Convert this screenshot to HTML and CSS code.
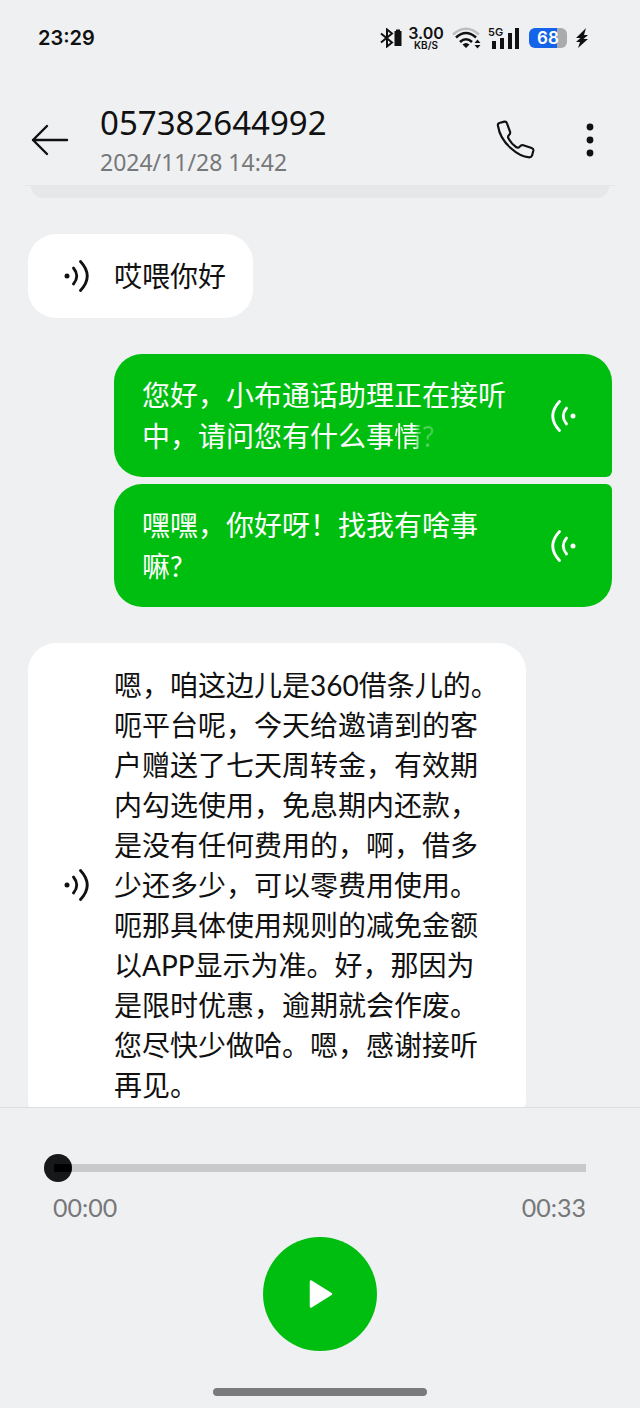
FILE: index.html
```html
<!DOCTYPE html>
<html lang="zh-CN">
<head>
<meta charset="utf-8">
<meta name="viewport" content="width=device-width, initial-scale=1">
<title>057382644992</title>
<link rel="stylesheet" href="styles.css">
</head>
<body>
<svg class="defs" aria-hidden="true">
  <symbol id="voice" viewBox="0 0 26 34">
    <circle cx="3" cy="17" r="2.500" fill="currentColor"/>
    <path d="M9.500 9Q16 17 9.500 25M16.500 2.500Q30 17 16.500 31.500" fill="none" stroke="currentColor" stroke-width="2.800" stroke-linecap="round"/>
  </symbol>
</svg>
<div class="app">
  <div class="status">
    <span class="clock">23:29</span>
    <div class="indicators">
      <svg class="bt" viewBox="0 0 22 20" aria-hidden="true">
        <path d="M1 5.500L12 14.500L7 18.500V1.500L12 5.500L1 14.500" fill="none" stroke="#111" stroke-width="2"/>
        <path d="M16 1.500h4v1.500h1.500V18h-7V3H16z" fill="#111"/>
      </svg>
      <span class="speed"><span class="rate">3.00</span><span class="unit">KB/S</span></span>
      <svg class="wifi" viewBox="0 0 30 22" aria-hidden="true">
        <path d="M1 7.500Q14 -4 27 7.500" fill="none" stroke="#bbbdbf" stroke-width="2.500"/>
        <path d="M4 10.500Q14 1.500 24 10.500M8 15Q14 9.500 20 15" fill="none" stroke="#111" stroke-width="2.600"/>
        <path d="M10.500 17.500Q14 14.500 17.500 17.500L14 21zM22.500 16L25.500 12.500l3 3.500zM22.500 18L25.500 21.500l3-3.500z" fill="#111"/>
      </svg>
      <span class="cell">
        <svg viewBox="0 0 32 22" aria-hidden="true"><path d="M4 14h4v8H4zM12 11h4v11h-4zM20 6h4v16h-4zM27 1h4v21h-4z" fill="#111"/></svg>
        <span class="net">5G</span>
      </span>
      <span class="battery"><span class="level">68</span></span>
      <svg class="bolt" viewBox="0 0 14 22" aria-hidden="true"><path d="M11 1L1 11h4.500L1 15h4L3 21L13 12H8.500L13 8H9z" fill="#111"/></svg>
    </div>
  </div>

  <header class="header">
    <button class="icon-btn" type="button" aria-label="返回">
      <svg class="back" viewBox="0 0 38 32" aria-hidden="true"><path d="M36 16H2M16 2L2 16L16 30" fill="none" stroke="#111" stroke-width="2.400" stroke-linecap="round" stroke-linejoin="round"/></svg>
    </button>
    <div class="caller">
      <h1 class="number">057382644992</h1>
      <p class="date">2024/11/28 14:42</p>
    </div>
    <button class="icon-btn" type="button" aria-label="拨打">
      <svg class="phone" viewBox="48 56 120 120" aria-hidden="true"><path d="M54 74Q52 67 58 65L73 61Q79 60 81 66L90 91Q92 97 87 101Q82 106 86 112Q95 128 108 137Q114 141 119 136Q124 130 130 132L155 140Q161 142 160 148L156 163Q154 168 148 168Q120 166 92 140Q60 112 54 74Z" fill="none" stroke="#111" stroke-width="6.500" stroke-linejoin="round"/></svg>
    </button>
    <button class="icon-btn" type="button" aria-label="更多">
      <svg class="more" viewBox="0 0 8 34" aria-hidden="true"><g fill="#111"><circle cx="4" cy="4" r="3.400"/><circle cx="4" cy="17" r="3.400"/><circle cx="4" cy="30" r="3.400"/></g></svg>
    </button>
  </header>

  <main class="chat">
    <div class="previous"></div>
    <div class="bubble in">
      <svg class="voice" aria-hidden="true"><use href="#voice"/></svg>
      <p class="text">哎喂你好</p>
    </div>
    <div class="group">
      <div class="bubble out first">
        <p class="text">您好，小布通话助理正在接听中，请问您有什么事<span class="fade">情?</span></p>
        <svg class="voice" aria-hidden="true"><use href="#voice"/></svg>
      </div>
      <div class="bubble out last">
        <p class="text">嘿嘿，你好呀！找我有啥事嘛?</p>
        <svg class="voice" aria-hidden="true"><use href="#voice"/></svg>
      </div>
    </div>
    <div class="bubble in">
      <svg class="voice" aria-hidden="true"><use href="#voice"/></svg>
      <p class="text">嗯，咱这边儿是360借条儿的。呃平台呢，今天给邀请到的客户赠送了七天周转金，有效期内勾选使用，免息期内还款，是没有任何费用的，啊，借多少还多少，可以零费用使用。呃那具体使用规则的减免金额以APP显示为准。好，那因为是限时优惠，逾期就会作废。您尽快少做哈。嗯，感谢接听再见。</p>
    </div>
  </main>

  <footer class="player">
    <input class="seek" type="range" min="0" max="33" value="0" aria-label="播放进度">
    <div class="times"><span>00:00</span><span>00:33</span></div>
    <button class="play" type="button" aria-label="播放">
      <svg viewBox="0 0 24 30" aria-hidden="true"><path d="M2 2.500V27.500L22 15Z" fill="#fff" stroke="#fff" stroke-width="2.500" stroke-linejoin="round"/></svg>
    </button>
    <div class="home"></div>
  </footer>
</div>
</body>
</html>
```
FILE: styles.css
```css
* {
  box-sizing: border-box;
}

body {
  margin: 0;
  background: #eff0f2;
  color: #111;
  font-family: Lato, "Noto Sans CJK SC", sans-serif;
}

h1,
p {
  margin: 0;
}

button {
  padding: 0;
  border: 0;
  background: none;
}

svg {
  display: block;
}

.defs {
  position: absolute;
  width: 0;
  height: 0;
}

.app {
  display: flex;
  flex-direction: column;
  height: 100vh;
}

/* Status bar */
.status {
  display: flex;
  align-items: center;
  justify-content: space-between;
  height: 76px;
  padding: 0 51px 0 38px;
}

.clock {
  font: 600 20px/24px Inter, sans-serif;
}

.indicators {
  display: flex;
  align-items: center;
}

.bt {
  width: 22px;
  height: 20px;
  margin-right: 7px;
}

.speed {
  display: flex;
  flex-direction: column;
  align-items: center;
  width: 34px;
  margin-right: 9px;
  font-family: Inter, sans-serif;
  font-weight: 600;
}

.rate {
  font-size: 16px;
  line-height: 14px;
}

.unit {
  font-size: 10px;
  line-height: 10px;
}

.wifi {
  width: 30px;
  height: 22px;
  margin-right: 6px;
}

.cell {
  position: relative;
  margin-right: 9px;
}

.cell svg {
  width: 32px;
  height: 22px;
}

.net {
  position: absolute;
  top: 0;
  left: 0;
  font: 600 11px/10px Inter, sans-serif;
}

.battery {
  width: 38px;
  height: 20px;
  margin-right: 8px;
  border-radius: 6px;
  background: linear-gradient(90deg, #1463e8 75%, #a9abad 75%);
  text-align: center;
}

.level {
  display: block;
  color: #fff;
  font: 600 17px/20px Inter, sans-serif;
}

.bolt {
  width: 14px;
  height: 22px;
}

/* Header */
.header {
  display: flex;
  align-items: center;
  min-height: 110px;
  margin: 0 25px;
  padding: 18px 21px 0 6px;
  border-bottom: 1px solid #e4e5e7;
}

.back {
  width: 38px;
  height: 32px;
}

.caller {
  flex: 1;
  margin-left: 31px;
  padding-top: 4px;
  font-family: "Noto Sans", sans-serif;
}

.number {
  font-size: 33px;
  line-height: 40px;
  font-weight: 400;
}

.date {
  color: #77787a;
  font-size: 23px;
  line-height: 38px;
}

.phone {
  width: 40px;
  height: 40px;
  margin-right: 50px;
}

.more {
  width: 8px;
  height: 34px;
}

/* Conversation */
.chat {
  display: flex;
  flex: 1;
  flex-direction: column;
  gap: 36px;
  min-height: 0;
  padding: 0 28px;
  overflow: hidden;
}

.previous {
  flex: none;
  height: 12px;
  margin: 0 3px;
  border-radius: 0 0 20px 20px;
  background: #e6e7e9;
}

.group {
  display: flex;
  flex: none;
  flex-direction: column;
  gap: 7px;
}

.bubble {
  display: flex;
  flex: none;
  align-items: center;
  border-radius: 28px;
  font-size: 28px;
}

.in {
  gap: 24px;
  align-self: flex-start;
  margin-right: 86px;
  padding: 22px 27px 22px 36px;
  background: #fff;
  line-height: 40px;
}

.out {
  gap: 36px;
  margin-left: 86px;
  padding: 21px 36px 20px 28px;
  background: #00be10;
  color: #fff;
  line-height: 41px;
}

.out .text {
  flex: 1;
}

.first {
  border-bottom-right-radius: 6px;
}

.last {
  border-top-right-radius: 6px;
}

.voice {
  flex: none;
  width: 26px;
  height: 34px;
}

.out .voice {
  transform: scaleX(-1);
}

.fade {
  background: linear-gradient(90deg, #fff 50%, #6fdc77 60%, #35cb42);
  background-clip: text;
  color: transparent;
}

/* Player */
.player {
  display: flex;
  flex: none;
  flex-direction: column;
  align-items: center;
  padding: 46px 54px 12px 44px;
  border-top: 1px solid #dcddde;
}

.seek {
  width: 100%;
  height: 28px;
  margin: 0;
  appearance: none;
  background: none;
}

.seek::-webkit-slider-runnable-track {
  height: 28px;
  background: linear-gradient(90deg, transparent 10px, #c8c9cb 10px) center / 100% 8px no-repeat;
}

.seek::-webkit-slider-thumb {
  width: 28px;
  height: 28px;
  appearance: none;
  border-radius: 50%;
  background: linear-gradient(#000, #000) right center / 18px 8px no-repeat #17181a;
}

.times {
  display: flex;
  align-self: stretch;
  justify-content: space-between;
  margin-top: 9px;
  padding-left: 9px;
  color: #77787a;
  font-size: 25px;
  line-height: 32px;
}

.play {
  display: flex;
  align-items: center;
  justify-content: center;
  width: 114px;
  height: 114px;
  margin: 14px 0 37px 10px;
  border-radius: 50%;
  background: #00be10;
}

.play svg {
  width: 24px;
  height: 30px;
  margin-left: 2px;
}

.home {
  width: 214px;
  height: 8px;
  margin-left: 10px;
  border-radius: 4px;
  background: #7a7b7d;
}
```
